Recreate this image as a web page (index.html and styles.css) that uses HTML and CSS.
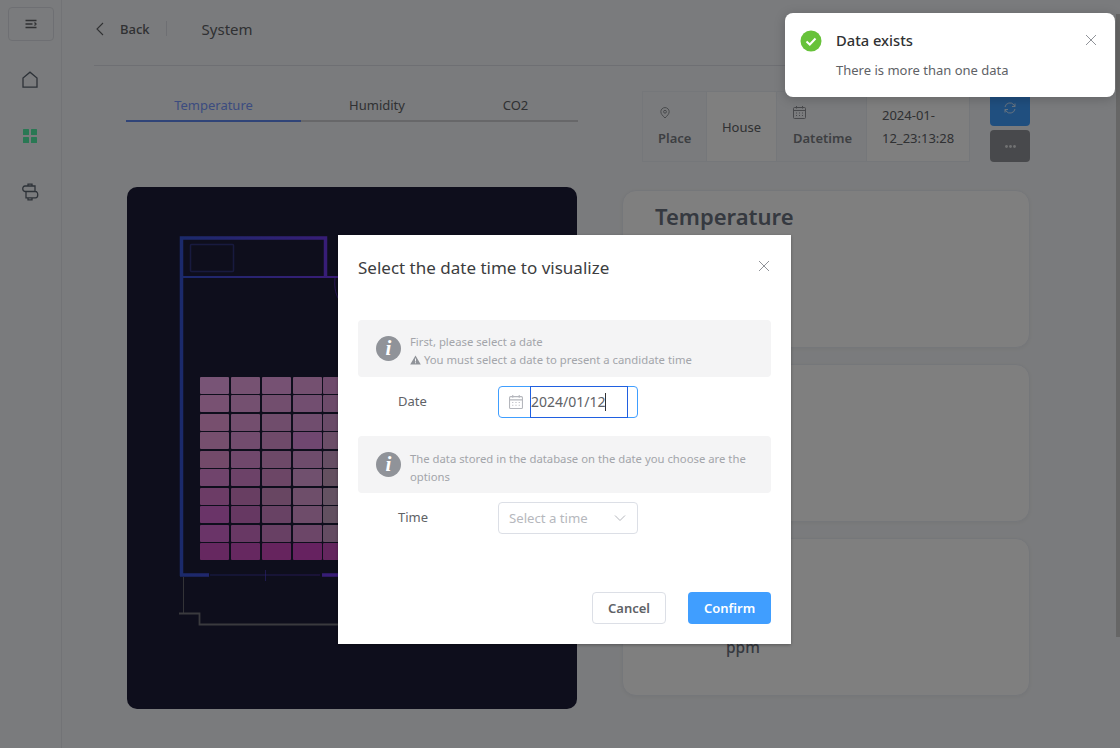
FILE: index.html
```html
<!DOCTYPE html>
<html lang="en">
<head>
<meta charset="utf-8">
<title>System</title>
<link rel="stylesheet" href="styles.css">
</head>
<body>
	<aside class="side">
		<div class="menu-btn">
			<svg width="12" height="10" viewBox="0 0 12 10" fill="none" stroke="#606266" stroke-width="1.300"><path d="M0.500 1.500h11M0.500 5h7M0.500 8.500h11M9.500 3.500 11 5 9.500 6.500"/></svg>
		</div>
		<ul class="side-list">
			<li><svg width="18" height="18" viewBox="0 0 18 18" fill="none" stroke="#5a6470" stroke-width="1.3"><path d="M2 16.200V7L9 1.200 16 7v9.200z"/></svg></li>
			<li><svg width="14" height="14" viewBox="0 0 14 14" fill="#54f0a8"><rect width="6" height="6" rx="0.500"/><rect width="6" height="6" x="8" rx="0.500"/><rect width="6" height="6" y="8" rx="0.500"/><rect width="6" height="6" x="8" y="8" rx="0.500"/></svg></li>
			<li><svg width="18" height="18" viewBox="0 0 18 18" fill="none" stroke="#5a6470" stroke-width="1.300"><path d="M7 3V1.200h4V3M7 14.800v2h4v-2M4 3h10v5.500H4C1 8.500 1 3 4 3zM5 8.500v6.300h9.500c3 0 3-6.300 0-6.300"/></svg></li>
		</ul>
	</aside>

	<main class="main">
		<header class="top">
			<svg class="back-icon" width="10" height="14" viewBox="0 0 10 14" fill="none" stroke="#606266" stroke-width="1.100"><path d="M8 1 2 7l6 6"/></svg>
			<span class="back">Back</span>
			<span class="top-sep"></span>
			<span class="top-title">System</span>
		</header>

		<div class="content">
			<section class="left">
				<div class="tabs">
					<div class="tab on">Temperature</div>
					<div class="tab">Humidity</div>
					<div class="tab">CO2</div>
				</div>
				<div class="map">
					<svg width="450" height="522" viewBox="127 187 450 522">
						<defs>
							<linearGradient id="wall" gradientUnits="userSpaceOnUse" x1="180" y1="0" x2="340" y2="0">
								<stop offset="0" stop-color="#3654d6"/>
								<stop offset="1" stop-color="#7438f0"/>
							</linearGradient>
						</defs>
						<g fill="none" stroke="url(#wall)">
							<path stroke-width="3.5" d="M181.500 576V238H325.500V277"/>
							<path stroke-width="2" d="M183 277H340"/>
							<path stroke-width="3.5" d="M180 575H209M322 575H340"/>
							<path stroke-width="1" opacity="0.6" d="M210 575H320M265.500 570V581M335 278C334 288 336 296 340 301"/>
						</g>
						<rect x="190.500" y="244.500" width="43" height="27" rx="1" fill="none" stroke="#30357f" stroke-width="1.500"/>
						<path d="M183.500 577V613" fill="none" stroke="#66666e" stroke-width="1"/>
						<path d="M179 613.500H199.500V624.500H340" fill="none" stroke="#74747c" stroke-width="1.800"/>
						<g>
							<rect x="200" y="377" width="29" height="17" rx="1" fill="#f0a8ec"/><rect x="231" y="377" width="29" height="17" rx="1" fill="#eca4e4"/><rect x="262" y="377" width="29" height="17" rx="1" fill="#eca2e6"/><rect x="293" y="377" width="29" height="17" rx="1" fill="#e8a0e0"/><rect x="323" y="377" width="29" height="17" rx="1" fill="#de96d8"/>
							<rect x="200" y="395" width="29" height="17" rx="1" fill="#f0a2e4"/><rect x="231" y="395" width="29" height="17" rx="1" fill="#e8a0e0"/><rect x="262" y="395" width="29" height="17" rx="1" fill="#e49cdc"/><rect x="293" y="395" width="29" height="17" rx="1" fill="#e49ce0"/><rect x="323" y="395" width="29" height="17" rx="1" fill="#da96d4"/>
							<rect x="200" y="414" width="29" height="17" rx="1" fill="#ee9edc"/><rect x="231" y="414" width="29" height="17" rx="1" fill="#e69cdc"/><rect x="262" y="414" width="29" height="17" rx="1" fill="#e09ad8"/><rect x="293" y="414" width="29" height="17" rx="1" fill="#e09adc"/><rect x="323" y="414" width="29" height="17" rx="1" fill="#d496d0"/>
							<rect x="200" y="432" width="29" height="17" rx="1" fill="#ec9edc"/><rect x="231" y="432" width="29" height="17" rx="1" fill="#e498dc"/><rect x="262" y="432" width="29" height="17" rx="1" fill="#de94d4"/><rect x="293" y="432" width="29" height="17" rx="1" fill="#e08ee0"/><rect x="323" y="432" width="29" height="17" rx="1" fill="#d89cd0"/>
							<rect x="200" y="451" width="29" height="17" rx="1" fill="#e694d4"/><rect x="231" y="451" width="29" height="17" rx="1" fill="#e090d8"/><rect x="262" y="451" width="29" height="17" rx="1" fill="#da92d0"/><rect x="293" y="451" width="29" height="17" rx="1" fill="#dc98d8"/><rect x="323" y="451" width="29" height="17" rx="1" fill="#cc9cc8"/>
							<rect x="200" y="469" width="29" height="17" rx="1" fill="#e088d8"/><rect x="231" y="469" width="29" height="17" rx="1" fill="#d884d0"/><rect x="262" y="469" width="29" height="17" rx="1" fill="#d88ccc"/><rect x="293" y="469" width="29" height="17" rx="1" fill="#e0a0dc"/><rect x="323" y="469" width="29" height="17" rx="1" fill="#c8a0c0"/>
							<rect x="200" y="488" width="29" height="17" rx="1" fill="#d878cc"/><rect x="231" y="488" width="29" height="17" rx="1" fill="#d07cc4"/><rect x="262" y="488" width="29" height="17" rx="1" fill="#d08cc4"/><rect x="293" y="488" width="29" height="17" rx="1" fill="#dc9cd4"/><rect x="323" y="488" width="29" height="17" rx="1" fill="#c8a4c4"/>
							<rect x="200" y="506" width="29" height="17" rx="1" fill="#d468d0"/><rect x="231" y="506" width="29" height="17" rx="1" fill="#cc70c4"/><rect x="262" y="506" width="29" height="17" rx="1" fill="#d084c8"/><rect x="293" y="506" width="29" height="17" rx="1" fill="#dc98d4"/><rect x="323" y="506" width="29" height="17" rx="1" fill="#c4a0c0"/>
							<rect x="200" y="525" width="29" height="17" rx="1" fill="#d468d0"/><rect x="231" y="525" width="29" height="17" rx="1" fill="#d070c8"/><rect x="262" y="525" width="29" height="17" rx="1" fill="#d080c8"/><rect x="293" y="525" width="29" height="17" rx="1" fill="#d88cd0"/><rect x="323" y="525" width="29" height="17" rx="1" fill="#c898c4"/>
							<rect x="200" y="543" width="29" height="17" rx="1" fill="#cc50c0"/><rect x="231" y="543" width="29" height="17" rx="1" fill="#cc50c0"/><rect x="262" y="543" width="29" height="17" rx="1" fill="#cc48bc"/><rect x="293" y="543" width="29" height="17" rx="1" fill="#cc44c0"/><rect x="323" y="543" width="29" height="17" rx="1" fill="#c84cbc"/>
						</g>
					</svg>
				</div>
			</section>

			<section class="right">
				<div class="info-row">
					<div class="info">
						<div class="cell label place">
							<svg width="10" height="12" viewBox="0 0 12 14" fill="none" stroke="#909399" stroke-width="1.200"><path d="M6 13C3 10 1 8 1 5.500a5 5 0 0 1 10 0C11 8 9 10 6 13z"/><circle cx="6" cy="5.500" r="1.700"/></svg>
							<b>Place</b>
						</div>
						<div class="cell val house">House</div>
						<div class="cell label dt">
							<svg width="13" height="13" viewBox="0 0 13 13" fill="none" stroke="#909399" stroke-width="1"><rect x="0.500" y="1.500" width="12" height="11" rx="1"/><path d="M0.500 4.500h12M3.500 0v2.500M9.500 0v2.500M3 7h1M6 7h1M9 7h1M3 9.500h1M6 9.500h1M9 9.500h1"/></svg>
							<b>Datetime</b>
						</div>
						<div class="cell val stamp">2024-01-12_23:13:28</div>
					</div>
					<div class="btns">
						<div class="sq blue">
							<svg width="12" height="12" viewBox="0 0 12 12" fill="none" stroke="#fff" stroke-width="1" opacity="0.75"><path d="M1 5a5 5 0 0 1 9-2l1 1.500M11 7a5 5 0 0 1-9 2L1 7.500M11 1.500v3H8M1 10.500v-3h3"/></svg>
						</div>
						<div class="sq grey">
							<svg width="11" height="3" viewBox="0 0 11 3" fill="#fff" opacity="0.75"><circle cx="1.500" cy="1.500" r="1.400"/><circle cx="5.500" cy="1.500" r="1.400"/><circle cx="9.500" cy="1.500" r="1.400"/></svg>
						</div>
					</div>
				</div>
				<div class="card"><h3>Temperature</h3></div>
				<div class="card"></div>
				<div class="card last"><span class="unit">ppm</span></div>
			</section>
		</div>
	</main>

	<div class="scroll-thumb"></div>
	<div class="overlay"></div>

	<div class="dialog">
		<div class="dialog-head">
			<span class="dialog-title">Select the date time to visualize</span>
			<svg width="12" height="12" viewBox="0 0 12 12" fill="none" stroke="#909399" stroke-width="1"><path d="M1 1l10 10M11 1 1 11"/></svg>
		</div>
		<div class="notice first">
			<i class="info-dot">i</i>
			<div class="notice-text">
				First, please select a date<br>
				<svg class="warn" width="11" height="10" viewBox="0 0 11 10" fill="#909399"><path d="M5.500 0.500 10.800 9.500H0.200zM5 3.500v3h1v-3zM5 7.300v1h1v-1z" fill-rule="evenodd"/></svg> You must select a date to present a candidate time
			</div>
		</div>
		<div class="field">
			<label>Date</label>
			<div class="date-box">
				<svg width="14" height="14" viewBox="0 0 13 13" fill="none" stroke="#b4b6bc" stroke-width="1"><rect x="0.500" y="1.500" width="12" height="11" rx="1"/><path d="M0.500 4.500h12M3.500 0v2.500M9.500 0v2.500M3 7h1M6 7h1M9 7h1M3 9.500h1M6 9.500h1M9 9.500h1"/></svg>
				<div class="date-input"><span class="date-val">2024/01/12</span></div>
			</div>
		</div>
		<div class="notice second">
			<i class="info-dot">i</i>
			<div class="notice-text">The data stored in the database on the date you choose are the options</div>
		</div>
		<div class="field">
			<label>Time</label>
			<div class="time-box">
				<span>Select a time</span>
				<svg width="12" height="8" viewBox="0 0 12 8" fill="none" stroke="#b4b6bc" stroke-width="1"><path d="M1 1.500 6 6.500l5-5"/></svg>
			</div>
		</div>
		<div class="dialog-foot">
			<div class="btn cancel">Cancel</div>
			<div class="btn confirm">Confirm</div>
		</div>
	</div>

	<div class="toast">
		<svg class="toast-ok" width="22" height="22" viewBox="0 0 22 22"><circle cx="11" cy="11" r="10.500" fill="#67c23a"/><path d="M6.500 11.500 9.800 14.500 15.500 8.500" fill="none" stroke="#fff" stroke-width="2"/></svg>
		<div class="toast-body">
			<div class="toast-title">Data exists</div>
			<div class="toast-msg">There is more than one data</div>
		</div>
		<svg class="toast-x" width="12" height="12" viewBox="0 0 12 12" fill="none" stroke="#909399" stroke-width="1"><path d="M1 1l10 10M11 1 1 11"/></svg>
	</div>
</body>
</html>
```

FILE: styles.css
```css
*{margin:0; padding:0; box-sizing:border-box;}
html, body{height:100%; overflow:hidden;}
body{display:flex; background:#f5f7fa; font-family:"Noto Sans", "Open Sans", sans-serif; font-size:14px; color:#606266;}
ul{list-style:none;}

.side{width:62px; height:748px; flex:none; border-right:1px solid #e4e7ed; padding-top:7px;}
.menu-btn{width:46px; height:34px; margin-left:8px; border:1px solid #dcdfe6; border-radius:4px; display:flex; align-items:center; justify-content:center;}
.side-list{margin-top:11px; padding-right:1px;}
.side-list li{height:56px; display:flex; align-items:center; justify-content:center;}

.main{width:968px; margin-left:32px; flex:none;}
.top{height:66px; border-bottom:1px solid #dcdfe6; display:flex; align-items:center; padding-bottom:8px;}
.back-icon{margin-left:1px;}
.back{margin-left:15px; font-size:13px; font-weight:500; color:#606266;}
.top-sep{width:1px; height:15px; background:#dcdfe6; margin:0 35px 0 16px;}
.top-title{font-size:15px; color:#606266;}

.content{display:flex; width:936px;}
.left{width:452px; margin-left:32px; flex:none;}
.tabs{display:grid; grid-template-columns:175px 152px 125px; margin-top:25px;}
.tab{height:31px; border-bottom:2px solid #cfcfd2; text-align:center; font-size:13px; line-height:28px; color:#606266;}
.tab.on{color:#7898ff; border-bottom-color:#6088f0;}
.map{width:450px; height:522px; margin:65px 0 0 1px; background:#1c1c38; border-radius:10px; overflow:hidden;}
.map svg{display:block;}

.right{width:408px; margin-left:44px; flex:none;}
.info-row{display:flex; justify-content:flex-end; margin-top:25px; height:71px;}
.info{display:flex; width:328px; height:71px; border:1px solid #ebeef5; background:#fff;}
.cell{border-right:1px solid #ebeef5; font-size:13px;}
.cell:last-child{border-right:0;}
.cell b{display:block; font-weight:600; color:#7b7e85;}
.label{background:#f5f7fa; padding:14px 0 0 15px;}
.label svg{display:block; margin-bottom:9px;}
.place svg{margin:1px 0 10px 2px;}
.place{width:64px;}
.house{width:70px; display:flex; align-items:center; justify-content:center;}
.dt{width:90px; padding-left:16px;}
.dt svg{margin-bottom:10px;}
.stamp{width:102px; padding:12px 14px 12px 15px; line-height:23px;}
.btns{margin-left:20px; width:40px;}
.sq{width:40px; display:flex; align-items:center; justify-content:center; border-radius:4px;}
.blue{height:36px; margin-top:-1px; margin-bottom:4px; background:#409eff;}
.grey{height:32px; background:#909399;}

.card{height:158px; margin-top:16px; background:#fff; border:1px solid #ebeef5; border-radius:14px; box-shadow:0 1px 4px rgba(0,0,0,.05);}
.info-row + .card{margin-top:28px;}
.card h3{margin:10px 0 0 32px; font-size:22px; line-height:30px; font-weight:600; color:#6b7280;}
.card.last{height:158px; padding:97px 0 0 103px;}
.unit{font-size:15.500px; line-height:22px; font-weight:500; color:#6b7280;}

.scroll-thumb{position:absolute; top:14px; left:1116px; width:4px; height:623px; background:#ccc;}
.overlay{position:absolute; inset:0; background:rgba(0,0,0,.5);}

.dialog{position:absolute; left:338px; top:235px; width:453px; height:409px; background:#fff; padding:0 20px; box-shadow:0 1px 3px rgba(0,0,0,.3);}
.dialog-head{height:85px; display:flex; justify-content:space-between; padding:19px 0 0; align-items:flex-start;}
.dialog-head svg{margin:6px 1px 0 0;}
.dialog-title{font-size:17px; line-height:28px; color:#3c3d40;}
.notice{height:57px; background:#f4f4f5; border-radius:4px; display:flex; align-items:center; padding-left:18px;}
.info-dot{width:25px; height:25px; flex:none; border-radius:50%; background:#909399; color:#fff; font:italic 700 21px/25px "Liberation Serif", serif; text-align:center;}
.notice-text{margin:5px 0 0 9px; font-size:11.300px; line-height:18px; color:#a3a5aa; padding-right:14px;}
.notice.second .notice-text{margin-top:7px;}
.warn{vertical-align:-1px;}
.field{display:flex; align-items:center; height:32px; margin-top:9px;}
.field label{width:140px; padding-left:40px; margin-top:-2px; color:#606266; font-size:13px;}
.date-box{width:140px; height:32px; border:1px solid #409eff; border-radius:4px; display:flex; align-items:center; padding-left:10px;}
.date-input{width:98px; height:32px; margin-left:7px; border:1px solid #2060e0; flex:none; display:flex; align-items:center; font-size:14px; color:#606266;}
.date-val{border-right:1px solid #303133; line-height:18px;}
.time-box{width:140px; height:32px; border:1px solid #dcdfe6; border-radius:4px; display:flex; justify-content:space-between; align-items:center; padding:0 11px 0 10px; color:#b6b8bd; font-size:13.200px;}
.notice.second{margin-top:18px;}
.dialog-foot{display:flex; justify-content:flex-end; gap:22px; margin-top:58px;}
.btn{height:32px; border-radius:4px; display:flex; align-items:center; justify-content:center; font-size:13px; font-weight:600;}
.cancel{width:74px; border:1px solid #dcdfe6; color:#606266;}
.confirm{width:83px; background:#409eff; color:#fff;}

.toast{position:absolute; left:785px; top:13px; width:330px; height:84px; background:#fff; border-radius:8px; box-shadow:0 2px 12px rgba(0,0,0,.2); display:flex; padding:17px 18px 0 15px;}
.toast-ok{flex:none;}
.toast-body{margin-left:14px; flex:1;}
.toast-title{font-size:14.700px; line-height:21px; font-weight:500; color:#303133;}
.toast-msg{margin-top:9px; font-size:13px; line-height:20px; color:#606266;}
.toast-x{margin-top:4px; flex:none;}
```
